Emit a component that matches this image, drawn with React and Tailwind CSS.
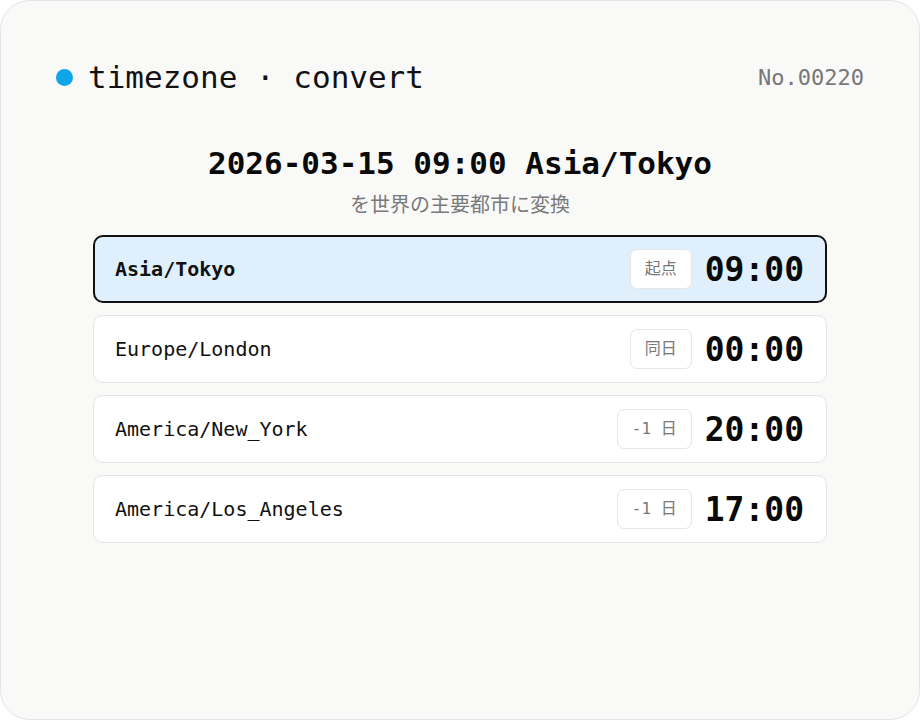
import React from "react";

const mono = { fontFamily: '"DejaVu Sans Mono", "Liberation Mono", "Noto Sans CJK JP", monospace' };

const rows = [
    { zone: "Asia/Tokyo", badge: "起点", time: "09:00", origin: true },
    { zone: "Europe/London", badge: "同日", time: "00:00" },
    { zone: "America/New_York", badge: "-1 日", time: "20:00" },
    { zone: "America/Los_Angeles", badge: "-1 日", time: "17:00" },
];

const Row = ({ zone, badge, time, origin }) => (
    <div
        className={
            origin
                ? "flex items-center h-[68px] pl-[20px] pr-[21px] rounded-[10px] border-2 border-[#111111] bg-[#dff0fc]"
                : "flex items-center h-[68px] pl-[21px] pr-[22px] rounded-[10px] border border-[#e4e4e4] bg-white"
        }
    >
        <span className={origin ? "flex-1 text-[20px] font-bold text-[#111]" : "flex-1 text-[20px] text-[#111]"}>{zone}</span>
        <span className="flex items-center h-[40px] px-[14px] rounded-[7px] border border-[#e6e6e6] bg-white text-[16px] text-[#777]">
            {badge}
        </span>
        <span className="ml-[13px] text-[33px] font-bold text-[#0a0a0a] leading-none">{time}</span>
    </div>
);

export default function App() {
    return (
        <div className="w-[920px] h-[720px] bg-white" style={mono}>
            <div className="h-full rounded-[30px] border border-[#e3e3e8] bg-[#f9f9f8] px-[55px] pt-[58px]">
                <header className="flex items-center h-[36px]">
                    <span className="w-[17px] h-[17px] rounded-full bg-[#0ea5e9]" />
                    <h1 className="ml-[15px] text-[31px] text-[#111] leading-[36px]">timezone · convert</h1>
                    <span className="ml-auto text-[22px] text-[#777]">No.00220</span>
                </header>

                <section className="mt-[50px] flex flex-col items-center">
                    <h2 className="text-[31px] font-bold text-[#0a0a0a] leading-[36px]">2026-03-15 09:00 Asia/Tokyo</h2>
                    <p
                        className="mt-[9px] text-[20px] leading-[28px] text-[#7a7a7a]"
                        style={{ fontFamily: '"Noto Sans CJK JP", sans-serif' }}
                    >
                        を世界の主要都市に変換
                    </p>
                </section>

                <div className="mt-[17px] mx-[37px] flex flex-col gap-[12px]">
                    {rows.map((r) => (
                        <Row key={r.zone} {...r} />
                    ))}
                </div>
            </div>
        </div>
    );
}
